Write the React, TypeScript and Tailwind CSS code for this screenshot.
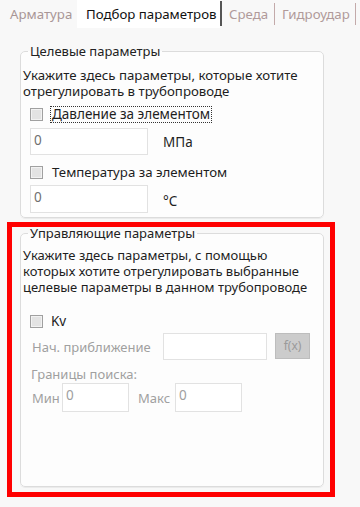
import React from "react";

const font = { fontFamily: '"Noto Sans", "Open Sans", Arial, sans-serif' };

function Check() {
  return (
    <span className="block h-[13px] w-[13px] shrink-0 border border-[#a0a0a0] bg-[#e3e3e3] shadow-[inset_0_0_0_1px_#f2f2f2]" />
  );
}

function Box({ w, h, value, dim }: { w: number; h: number; value?: string; dim?: boolean }) {
  return (
    <div
      className={`shrink-0 border border-[#e2e2e2] bg-white pl-[3px] pt-[3px] text-[13.5px] leading-[16px] ${
        dim ? "text-[#a0a0a0]" : "text-[#707070]"
      }`}
      style={{ width: w, height: h }}
    >
      {value}
    </div>
  );
}

function Tabs() {
  return (
    <div className="flex h-[28px] text-[13.25px] leading-[16px]">
      <div className="flex w-[77px] items-center pl-[10px] text-[#a89696]">Арматура</div>
      <div className="flex w-[143px] items-center bg-white pl-[9px] text-[#111]">Подбор параметров</div>
      <div className="mt-[1px] h-[25px] w-[2px] bg-[#555]" />
      <div className="flex w-[52px] items-center pl-[7px] text-[#b09a9a]">Среда</div>
      <div className="mt-[3px] h-[22px] w-px bg-[#c3aaaa]" />
      <div className="flex w-[80px] items-center pl-[7px] text-[#b09a9a]">Гидроудар</div>
      <div className="mt-[3px] h-[22px] w-px bg-[#c3aaaa]" />
    </div>
  );
}

export default function App() {
  return (
    <div className="h-[507px] w-[360px] overflow-hidden bg-[#f8f8f8] text-[#1e1e1e]" style={font}>
      <Tabs />

      <fieldset className="ml-[20px] mt-[15px] w-[304px] rounded-[5px] border border-[#dcdcdc] bg-[#fdfdfd] pb-[4px] shadow-[0_1px_0_#ebebeb]">
        <legend className="ml-[7px] px-[2px] text-[13px] leading-[16px] text-[#222]">Целевые параметры</legend>
        <p className="mt-[8px] pl-[2px] text-[13.25px] leading-[16px]">
          Укажите здесь параметры, которые хотите
          <br />
          отрегулировать в трубопроводе
        </p>
        <div className="ml-[9px] mt-[7px] flex h-[17px] items-center gap-[8px]">
          <Check />
          <span className="px-[1px] text-[13.5px] leading-[15px] outline-1 outline-dotted outline-[#333]">
            Давление за элементом
          </span>
        </div>
        <div className="ml-[9px] mt-[5px] flex items-center gap-[15px]">
          <Box w={118} h={27} value="0" />
          <span className="text-[13.5px] leading-[16px]">МПа</span>
        </div>
        <div className="ml-[9px] mt-[9px] flex h-[17px] items-center gap-[9px]">
          <Check />
          <span className="text-[13.25px] leading-[15px]">Температура за элементом</span>
        </div>
        <div className="ml-[9px] mt-[4px] flex items-center gap-[15px]">
          <Box w={118} h={28} value="0" />
          <span className="mt-[4px] text-[13.5px] leading-[16px]">°C</span>
        </div>
      </fieldset>

      <div className="ml-[7px] mt-[4px] h-[275px] w-[328px] border-[5px] border-[#ff0000] pl-[8px]">
        <fieldset className="-mt-[2px] h-[262px] w-[304px] rounded-[5px] border border-[#dcdcdc] bg-[#fdfdfd] shadow-[0_1px_0_#ebebeb]">
          <legend className="ml-[7px] px-[2px] text-[13px] leading-[16px] text-[#222]">Управляющие параметры</legend>
          <p className="mt-[6px] pl-[2px] text-[13px] leading-[16px]">
            Укажите здесь параметры, с помощью
            <br />
            которых хотите отрегулировать выбранные
            <br />
            целевые параметры в данном трубопроводе
          </p>
          <div className="ml-[9px] mt-[18px] flex h-[17px] items-center gap-[8px]">
            <Check />
            <span className="text-[13.5px] leading-[15px]">Kv</span>
          </div>
          <div className="mt-[3px] flex items-start text-[13px] leading-[16px] text-[#a0a0a0]">
            <span className="ml-[11px] mt-[6px] w-[131px]">Нач. приближение</span>
            <Box w={104} h={27} dim />
            <div className="ml-[8px] flex h-[26px] w-[35px] items-center justify-center border border-[#bdbdbd] bg-[#cccccc] text-[12px] text-[#9a9a9a]">
              f(x)
            </div>
          </div>
          <div className="ml-[10px] mt-[6px] text-[13px] leading-[16px] text-[#a0a0a0]">Границы поиска:</div>
          <div className="mt-[1px] flex items-center text-[13px] leading-[16px] text-[#a0a0a0]">
            <span className="ml-[11px] w-[30px]">Мин</span>
            <Box w={67} h={29} value="0" dim />
            <span className="ml-[9px] w-[37px]">Макс</span>
            <Box w={67} h={29} value="0" dim />
          </div>
        </fieldset>
      </div>
    </div>
  );
}
